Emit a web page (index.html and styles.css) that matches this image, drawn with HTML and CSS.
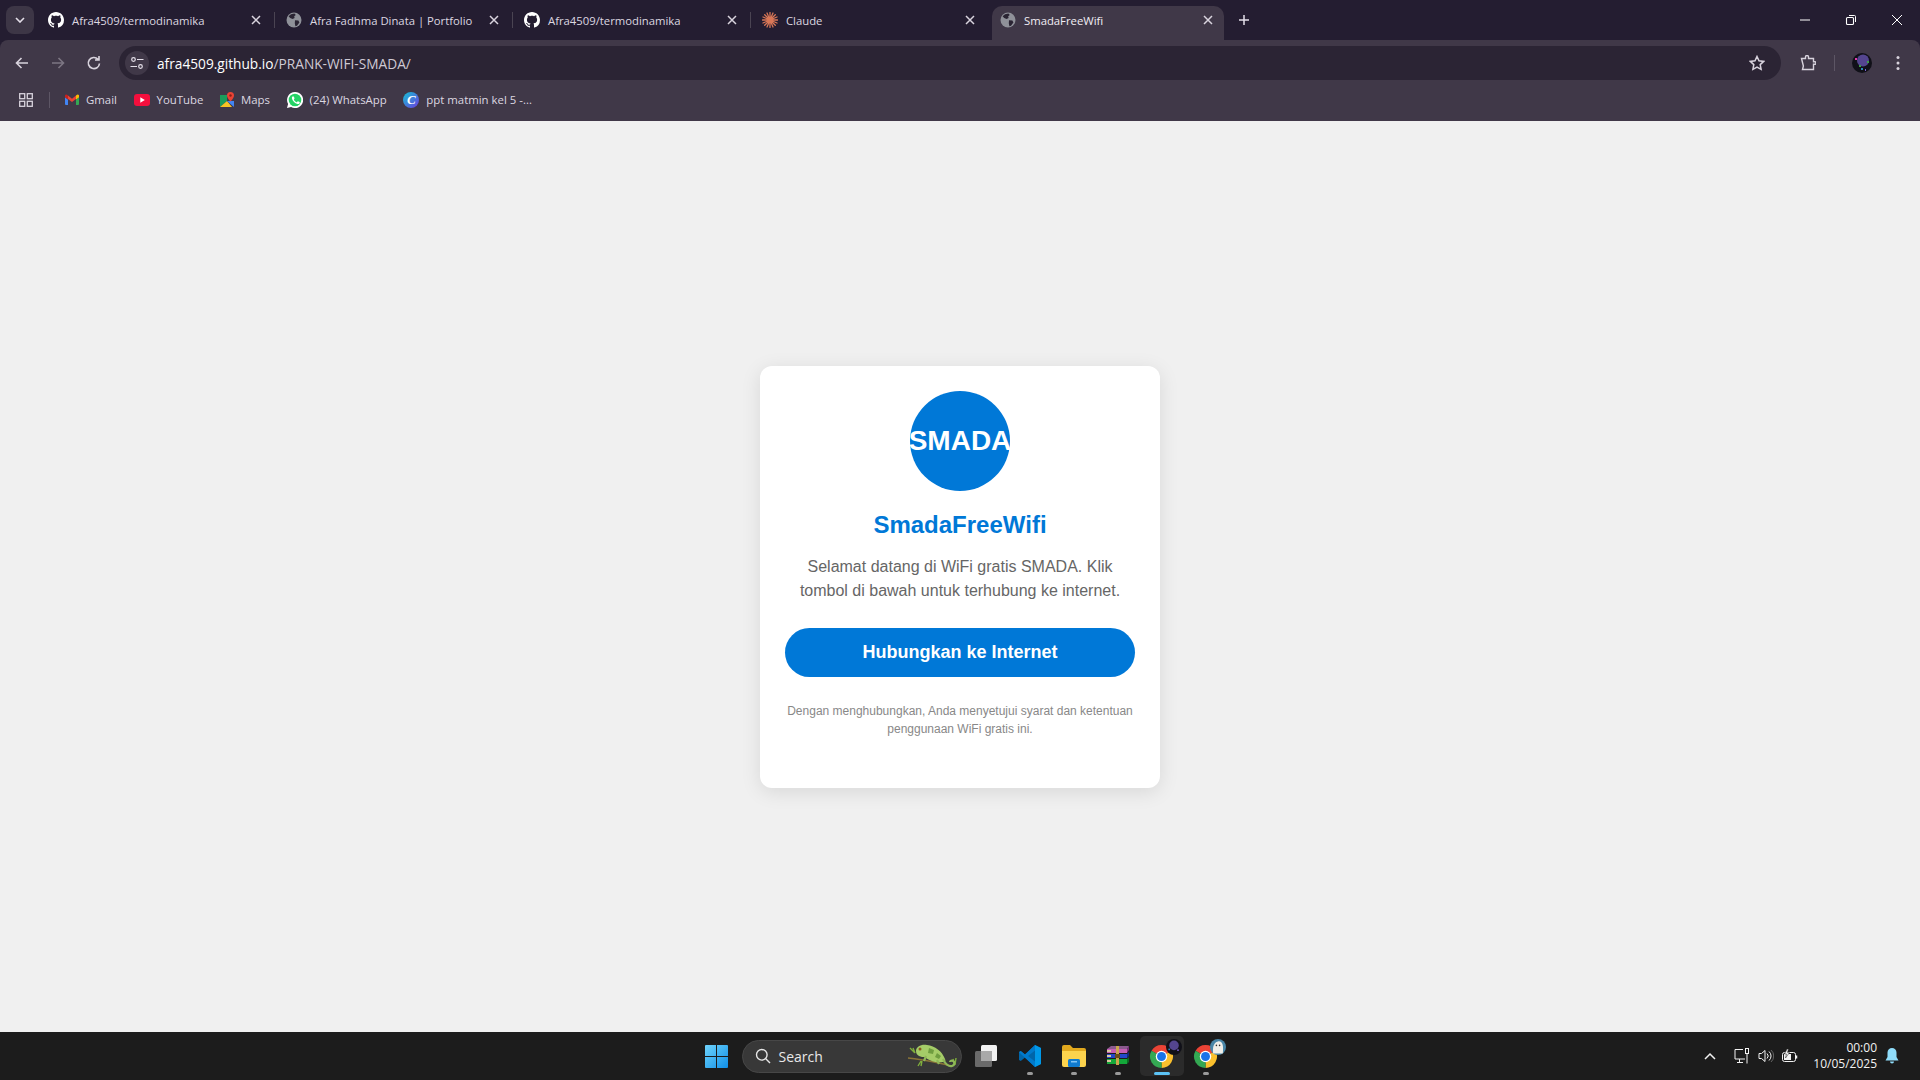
FILE: index.html
```html
<!DOCTYPE html>
<html>
<head>
    <title>SmadaFreeWifi</title>
    <link rel="stylesheet" href="styles.css">
</head>
<body>
    <svg class="defs" width="0" height="0">
        <symbol id="github" viewBox="0 0 16 16"><path fill="#fff" d="M8 0C3.58 0 0 3.58 0 8c0 3.54 2.29 6.53 5.47 7.59.4.07.55-.17.55-.38 0-.19-.01-.82-.01-1.49-2.01.37-2.53-.49-2.69-.94-.09-.23-.48-.94-.82-1.13-.28-.15-.68-.52-.01-.53.63-.01 1.08.58 1.23.82.72 1.21 1.87.87 2.33.66.07-.52.28-.87.51-1.07-1.78-.2-3.64-.89-3.64-3.95 0-.87.31-1.59.82-2.15-.08-.2-.36-1.02.08-2.12 0 0 .67-.21 2.2.82.64-.18 1.32-.27 2-.27.68 0 1.36.09 2 .27 1.53-1.04 2.2-.82 2.2-.82.44 1.1.16 1.92.08 2.12.51.56.82 1.27.82 2.15 0 3.07-1.87 3.75-3.65 3.95.29.25.54.73.54 1.48 0 1.07-.01 1.93-.01 2.2 0 .21.15.46.55.38A8.013 8.013 0 0016 8c0-4.42-3.58-8-8-8z"/></symbol>
        <symbol id="globe" viewBox="0 0 16 16"><circle cx="8" cy="8" r="7.500" fill="#8f9199"/><path fill="#2a2433" d="M5 2.200l3.400-.6 1.400 1.500-1.600 1.200.4 1.600-2 1.200-2.400-1-1.600-1.800zM9 8.200l3.400.4 1 1.800-2.400 3.400-1.600.4-.6-3z"/></symbol>
        <symbol id="close" viewBox="0 0 10 10"><path d="M1 1l8 8M9 1l-8 8" stroke="#d9d4de" stroke-width="1.500" fill="none"/></symbol>
        <symbol id="chrome" viewBox="0 0 24 24">
            <path fill="#ea4335" d="M12 12L2.470 6.500A11 11 0 0 1 21.530 6.500z"/>
            <path fill="#fbc02d" d="M12 12L21.530 6.500A11 11 0 0 1 12 23z"/>
            <path fill="#34a853" d="M12 12L12 23A11 11 0 0 1 2.470 6.500z"/>
            <circle cx="12" cy="12" r="5.500" fill="#fff"/><circle cx="12" cy="12" r="4.300" fill="#1a73e8"/>
        </symbol>
    </svg>

    <div class="tabstrip">
        <div class="tab-menu"><svg width="10" height="6" viewBox="0 0 10 6"><path d="M1 1l4 4 4-4" stroke="#e4dfe9" stroke-width="1.600" fill="none"/></svg></div>
        <div class="tab sep">
            <svg class="fav"><use href="#github"/></svg><span class="tab-title">Afra4509/termodinamika</span>
            <svg class="tab-x"><use href="#close"/></svg>
        </div>
        <div class="tab sep">
            <svg class="fav"><use href="#globe"/></svg><span class="tab-title">Afra Fadhma Dinata | Portfolio</span>
            <svg class="tab-x"><use href="#close"/></svg>
        </div>
        <div class="tab sep">
            <svg class="fav"><use href="#github"/></svg><span class="tab-title">Afra4509/termodinamika</span>
            <svg class="tab-x"><use href="#close"/></svg>
        </div>
        <div class="tab">
            <svg class="fav" viewBox="0 0 16 16"><path stroke="#d97757" stroke-width="1.300" stroke-linecap="round" d="M8 .5v15M.5 8h15M2.700 2.700l10.600 10.600M13.300 2.700L2.700 13.300M5 1l6 14M11 1L5 15M1 5l14 6M15 5L1 11"/><circle cx="8" cy="8" r="2.500" fill="#d97757"/></svg>
            <span class="tab-title">Claude</span>
            <svg class="tab-x"><use href="#close"/></svg>
        </div>
        <div class="tab active">
            <svg class="fav"><use href="#globe"/></svg><span class="tab-title">SmadaFreeWifi</span>
            <svg class="tab-x"><use href="#close"/></svg>
        </div>
        <svg class="new-tab" width="12" height="12" viewBox="0 0 12 12"><path d="M6 1v10M1 6h10" stroke="#e4dfe9" stroke-width="1.500"/></svg>
        <div class="win-btns">
            <svg width="12" height="12" viewBox="0 0 12 12"><path d="M1 6h10" stroke="#fff"/></svg>
            <svg width="12" height="12" viewBox="0 0 12 12"><rect x="1.500" y="3.500" width="7" height="7" rx="1" fill="none" stroke="#fff" stroke-width="1.100"/><path d="M4 1.500h5.500a1 1 0 0 1 1 1V8" fill="none" stroke="#fff"/></svg>
            <svg width="12" height="12" viewBox="0 0 12 12"><path d="M1 1l10 10M11 1L1 11" stroke="#fff"/></svg>
        </div>
    </div>

    <div class="toolbar">
        <svg class="nav-icon" viewBox="0 0 16 16"><path d="M14 8H2.500M7.500 3L2.500 8l5 5" stroke="#d8d3dd" stroke-width="1.600" fill="none"/></svg>
        <svg class="nav-icon" viewBox="0 0 16 16"><path d="M2 8h11.500M8.500 3l5 5-5 5" stroke="#7c7683" stroke-width="1.600" fill="none"/></svg>
        <svg class="nav-icon" viewBox="0 0 16 16"><path d="M13.500 8.500A5.600 5.600 0 1 1 12 4.200M13 1v4H9" stroke="#d8d3dd" stroke-width="1.600" fill="none"/></svg>
        <div class="omnibox">
            <span class="site-info"><svg width="14" height="14" viewBox="0 0 14 14"><g fill="none" stroke="#e4dfe9" stroke-width="1.200"><circle cx="3.500" cy="3.500" r="1.800"/><circle cx="10.500" cy="10.500" r="1.800"/><path d="M7 3.500h6.500M.5 10.500H7"/></g></svg></span>
            <span class="url">afra4509.github.io<span class="url-path">/PRANK-WIFI-SMADA/</span></span>
            <svg class="star" width="16" height="16" viewBox="0 0 16 16"><path d="M8 1.500l2 4.300 4.700.6-3.500 3.200.9 4.700L8 12l-4.100 2.300.9-4.700-3.500-3.200 4.700-.6z" fill="none" stroke="#d8d3dd" stroke-width="1.500"/></svg>
        </div>
        <svg class="ext" width="16" height="16" viewBox="0 0 16 16"><path d="M1.500 3.500h4V2a1 1 0 0 1 3 0v1.500h5v3.200h1.200a1 1 0 0 1 0 2.600h-1.200v5.200h-11l.9-3.500-.9-3.500z" fill="none" stroke="#d8d3dd" stroke-width="1.400"/></svg>
        <span class="tool-sep"></span>
        <svg class="avatar" width="20" height="20" viewBox="0 0 20 20"><circle cx="10" cy="10" r="10" fill="#101018"/><circle cx="11" cy="7.500" r="6" fill="#54458f"/><rect x="3" y="5" width="2" height="2" fill="#e23aa8"/><rect x="15" y="8" width="2" height="2" fill="#3f9a4a"/><rect x="7" y="12" width="2" height="2" fill="#3f9a4a"/><rect x="9" y="15" width="2" height="2" fill="#2b86b8"/><rect x="13" y="16" width="1" height="2" fill="#7c62d0"/></svg>
        <svg class="dots" width="4" height="16" viewBox="0 0 4 16"><g fill="#d8d3dd"><circle cx="2" cy="2.500" r="1.500"/><circle cx="2" cy="8" r="1.500"/><circle cx="2" cy="13.500" r="1.500"/></g></svg>
    </div>

    <div class="bookmarks">
        <svg class="apps" width="14" height="14" viewBox="0 0 14 14"><g fill="none" stroke="#d8d3dd" stroke-width="1.300"><rect x=".7" y=".7" width="5" height="5"/><rect x="8.300" y=".7" width="5" height="5"/><rect x=".7" y="8.300" width="5" height="5"/><rect x="8.300" y="8.300" width="5" height="5"/></g></svg>
        <span class="bm-sep"></span>
        <div class="bm">
            <svg width="14" height="11" viewBox="0 0 14 11"><path fill="#ea4335" d="M3 1.500l4 3.200 4-3.200v3.400L7 8 3 4.900z"/><path fill="#c5221f" d="M0 2v1.500l3 2.300V1.500L2 .7A1.300 1.300 0 0 0 0 2z"/><path fill="#fbbc04" d="M14 2v1.500l-3 2.300V1.500l1-.8A1.300 1.300 0 0 1 14 2z"/><path fill="#4285f4" d="M0 3.500l3 2.300V11H1a1 1 0 0 1-1-1z"/><path fill="#34a853" d="M14 3.500l-3 2.300V11h2a1 1 0 0 0 1-1z"/></svg>
            <span>Gmail</span>
        </div>
        <div class="bm">
            <svg width="16" height="12" viewBox="0 0 16 12"><rect width="16" height="12" rx="3" fill="#f40f3d"/><path d="M6.300 3.300v5.400L10.800 6z" fill="#fff"/></svg>
            <span>YouTube</span>
        </div>
        <div class="bm">
            <svg width="14" height="16" viewBox="0 0 14 16"><path fill="#1a9c5b" d="M0 3h7v6l-7 6z"/><path fill="#f7c325" d="M0 15l7-6 5 6z"/><path fill="#4285f4" d="M7 9l7 6V9z"/><path fill="#ea4335" d="M10.500 0A3.500 3.500 0 0 0 7 3.500C7 6 10.500 9.500 10.500 9.500S14 6 14 3.500A3.500 3.500 0 0 0 10.500 0z"/><circle cx="10.500" cy="3.500" r="1.200" fill="#8a1f17"/></svg>
            <span>Maps</span>
        </div>
        <div class="bm">
            <svg width="16" height="16" viewBox="0 0 16 16"><path fill="#fff" d="M8 0a8 8 0 0 0-6.900 12L0 16l4.100-1.100A8 8 0 1 0 8 0z"/><circle cx="8" cy="8" r="6.300" fill="#25d366"/><path fill="#fff" d="M5.800 4.400c-.3 0-.9.400-.9 1.500s.8 2.300 1 2.500c.1.200 1.600 2.500 3.900 3.300 1.300.5 1.900.3 2.300 0 .4-.3.700-1 .7-1.300l-.2-.3-1.600-.8c-.2 0-.4 0-.5.200l-.6.700c-.1.100-.3.100-.4 0-.4-.2-1.900-.9-2.600-2.500 0-.2 0-.3.100-.4l.5-.7v-.4l-.7-1.600c-.2-.2-.7-.2-1-.2z"/></svg>
            <span>(24) WhatsApp</span>
        </div>
        <div class="bm">
            <span class="canva">C</span>
            <span>ppt matmin kel 5 -...</span>
        </div>
    </div>

    <div class="page">
        <div class="card">
            <div class="logo">SMADA</div>
            <h1>SmadaFreeWifi</h1>
            <p class="intro">Selamat datang di WiFi gratis SMADA. Klik tombol di bawah untuk terhubung ke internet.</p>
            <button class="connect">Hubungkan ke Internet</button>
            <p class="terms">Dengan menghubungkan, Anda menyetujui syarat dan ketentuan penggunaan WiFi gratis ini.</p>
        </div>
    </div>

    <div class="taskbar">
        <div class="task-center">
            <div class="task-item">
                <svg width="23" height="23" viewBox="0 0 23 23"><defs><linearGradient id="win" x1="0" y1="0" x2="1" y2="1"><stop offset="0" stop-color="#6fd3fb"/><stop offset="1" stop-color="#0f8fe8"/></linearGradient></defs><path fill="url(#win)" d="M1 0h10v11H0V1a1 1 0 0 1 1-1zM12 0h10a1 1 0 0 1 1 1v10H12zM0 12h11v11H1a1 1 0 0 1-1-1zM12 12h11v10a1 1 0 0 1-1 1H12z"/></svg>
            </div>
            <div class="search">
                <svg width="16" height="16" viewBox="0 0 16 16"><circle cx="6.800" cy="6.800" r="5.300" fill="none" stroke="#e6e6e6" stroke-width="1.400"/><path d="M10.800 10.800l4.200 4.200" stroke="#e6e6e6" stroke-width="1.400"/></svg>
                <span>Search</span>
                <svg class="chameleon" width="52" height="26" viewBox="0 0 52 26">
                    <path d="M1 15c14 1 30 5 44 8" stroke="#8a7437" stroke-width="1.500" fill="none"/>
                    <path d="M3 5l5 5M6 5l2 5M11 23l3-5M14 23l1-5M49 15l-1 7M46 16l2 6" stroke="#7fae3c" stroke-width="1.400" fill="none"/>
                    <path fill="#a5cc68" d="M9 8c0-4 5-7 11-6 8 1 15 6 18 14 1 2 0 3-2 3-7 1-14-1-18-5-2 0-4 0-6-1-2-1-3-3-3-5z"/>
                    <path fill="#6f9d3f" d="M22 5l5 2-1 4-5-1zM30 10l4 3-2 3-4-2z"/>
                    <path d="M36 16c2 5 6 8 9 7 3-1 3-4 1-5-1-1-3 0-3 1" stroke="#8fb858" stroke-width="2.200" fill="none"/>
                    <path d="M19 13l-2 5M30 17l2 4" stroke="#8fb858" stroke-width="2.200"/>
                    <circle cx="13" cy="6" r="1.500" fill="#8a5a1e"/>
                </svg>
            </div>
            <div class="task-item">
                <svg width="24" height="24" viewBox="0 0 24 24"><rect x="7" y="1" width="16" height="16" rx="1.500" fill="#f2f2f2"/><rect x="1" y="7" width="17" height="16" rx="1.500" fill="#6a6a6a"/><rect x="7" y="7" width="11" height="10" fill="#a9a9a9"/></svg>
            </div>
            <div class="task-item open">
                <svg width="24" height="24" viewBox="0 0 24 24"><path fill="#0065a9" d="M17 1l6 3v16l-6 3-10-9.500L2.800 17 1 16V8l1.800-1L7 10.500z"/><path fill="#0098e8" d="M17 1l6 3v16l-6 3z"/><path fill="#007acc" d="M17 6.500L10 12l7 5.500V23L4 11l-3-3 1.800-1L7 10.500 17 1z"/></svg>
            </div>
            <div class="task-item open">
                <svg width="24" height="22" viewBox="0 0 24 22"><path fill="#e2a91e" d="M0 2a2 2 0 0 1 2-2h6l3 3h11a2 2 0 0 1 2 2v3H0z"/><path fill="#fcd34d" d="M0 6h24v14a2 2 0 0 1-2 2H2a2 2 0 0 1-2-2z"/><rect x="6" y="14" width="12" height="8" rx="1.500" fill="#0f7bd0"/><rect x="9" y="16" width="6" height="1.500" fill="#7fc4f5"/></svg>
            </div>
            <div class="task-item open">
                <svg width="24" height="20" viewBox="0 0 24 20">
                    <path fill="#8a5a8e" d="M1 3l4-3h18l-2 3z"/>
                    <path fill="#c65fb4" d="M1 3h20v4H1z"/><path fill="#7b2f7d" d="M21 3l2-3v4l-2 3z"/>
                    <path fill="#2348c8" d="M1 8h20v4H1z"/><path fill="#142a80" d="M21 8l2-2v4l-2 2z"/>
                    <path fill="#14a83a" d="M1 13h20v5H1z"/><path fill="#0b6a24" d="M21 13l2-2v5l-2 2z"/>
                    <path fill="#d8c9a0" d="M1 4h4v2H1zM1 9h4v2H1zM1 14h4v2H1z"/>
                    <path fill="#caa64c" d="M10 0h3v19h-3z"/><rect x="9" y="8" width="5" height="4" fill="#6b4d1c"/>
                </svg>
            </div>
            <div class="task-item running">
                <svg width="25" height="25"><use href="#chrome"/></svg>
                <svg class="chrome-badge" width="16" height="16" viewBox="0 0 20 20"><circle cx="10" cy="10" r="10" fill="#101018"/><circle cx="10" cy="8" r="6" fill="#54458f"/><rect x="3" y="12" width="2" height="2" fill="#2b86b8"/><rect x="14" y="13" width="2" height="2" fill="#7c62d0"/></svg>
            </div>
            <div class="task-item open">
                <svg width="25" height="25"><use href="#chrome"/></svg>
                <svg class="chrome-badge" width="16" height="16" viewBox="0 0 20 20"><circle cx="10" cy="10" r="10" fill="#4a87a8"/><path d="M4 18c-1-6 0-14 6-15s7 6 6 15z" fill="#f0efe9"/><circle cx="8" cy="8" r="1" fill="#333"/><circle cx="12" cy="8" r="1" fill="#333"/></svg>
            </div>
        </div>
        <div class="tray">
            <svg class="tray-chevron" width="12" height="8" viewBox="0 0 12 8"><path d="M1 7l5-5 5 5" stroke="#f2f2f2" stroke-width="1.500" fill="none"/></svg>
            <svg class="tray-net" width="16" height="16" viewBox="0 0 16 16"><path d="M9 1.500H1v9.500h10M5.500 11v3M3 14.500h6" fill="none" stroke="#f2f2f2"/><rect x="11.500" y=".5" width="3" height="5" fill="none" stroke="#f2f2f2"/><path d="M13 5.500v10" stroke="#f2f2f2"/></svg>
            <svg class="tray-vol" width="16" height="16" viewBox="0 0 16 16"><path d="M1 5.500h2.500L7 2.500v11l-3.500-3H1z" fill="none" stroke="#f2f2f2"/><path d="M9 5.500a3.500 3.500 0 0 1 0 5M11 3.500a6 6 0 0 1 0 9" fill="none" stroke="#f2f2f2"/><path d="M13 2a8 8 0 0 1 0 12" fill="none" stroke="#666"/></svg>
            <svg class="tray-bat" width="16" height="14" viewBox="0 0 16 14"><rect x=".5" y="3.500" width="13" height="9" rx="2" fill="none" stroke="#f2f2f2"/><path d="M14.500 6.500v3" stroke="#f2f2f2" stroke-width="1.500"/><rect x="2" y="5" width="7" height="6" fill="#f2f2f2"/><path d="M5 0L2.500 5h2L3.500 9 7.500 3.500h-2L6.500 0z" fill="#f2f2f2" stroke="#1c1c1c" stroke-width=".5"/></svg>
            <div class="clock"><span>00:00</span><span>10/05/2025</span></div>
            <svg class="bell" width="14" height="16" viewBox="0 0 14 16"><path fill="#8fdcfa" d="M7 0a4.500 4.500 0 0 0-4.500 4.500V9L.5 12.500h13L11.500 9V4.500A4.500 4.500 0 0 0 7 0zM5 13.500a2 2 0 0 0 4 0z"/></svg>
        </div>
    </div>
</body>
</html>
```

FILE: styles.css
```css
* {
    box-sizing: border-box;
}

html, body {
    height: 100%;
}

body {
    margin: 0;
    display: flex;
    flex-direction: column;
    overflow: hidden;
    font-family: "Liberation Sans", Arial, sans-serif;
    background-color: #241d31;
}

.defs {
    display: none;
}

/* browser tabs */
.tabstrip {
    height: 40px;
    flex: none;
    display: flex;
    align-items: flex-start;
    padding: 6px 0 0 6px;
    background-color: #241d31;
    font-family: "Open Sans", sans-serif;
    font-size: 11.300px;
    color: #dcd7e0;
}

.tab-menu {
    width: 28px;
    height: 28px;
    margin-right: 3px;
    border-radius: 8px;
    background-color: #3d3646;
    display: flex;
    align-items: center;
    justify-content: center;
}

.tab {
    position: relative;
    width: 238px;
    height: 34px;
    flex: none;
    display: flex;
    align-items: center;
    padding: 0 0 6px 11px;
}

.tab.sep::after {
    content: "";
    position: absolute;
    right: 0;
    top: 6px;
    height: 16px;
    width: 1px;
    background-color: #4a4452;
}

.tab.active {
    width: 232px;
    margin: 0 3px;
    padding-left: 8px;
    border-radius: 10px 10px 0 0;
    background-color: #403848;
    color: #f1edf4;
}

.fav {
    width: 16px;
    height: 16px;
    flex: none;
}

.tab-title {
    margin-left: 8px;
    white-space: nowrap;
}

.tab-x {
    position: absolute;
    right: 14px;
    top: 9px;
    width: 10px;
    height: 10px;
}

.tab.active .tab-x {
    right: 11px;
}

.new-tab {
    margin: 8px 0 0 11px;
}

.win-btns {
    margin-left: auto;
    padding: 8px 17px 0 0;
    display: flex;
    gap: 34px;
}

/* address bar */
.toolbar {
    height: 41px;
    flex: none;
    display: flex;
    align-items: center;
    padding: 5px 16px 0 14px;
    border-radius: 8px 8px 0 0;
    background-color: #403848;
}

.nav-icon {
    width: 16px;
    height: 16px;
    margin-right: 20px;
    flex: none;
}

.omnibox {
    width: 1662px;
    height: 34px;
    margin: 0 0 0 -3px;
    flex: none;
    display: flex;
    align-items: center;
    padding: 0 16px 0 6px;
    border-radius: 17px;
    background-color: #2b2434;
}

.site-info {
    width: 24px;
    height: 24px;
    border-radius: 50%;
    background-color: #403848;
    display: flex;
    align-items: center;
    justify-content: center;
}

.url {
    margin-left: 8px;
    font-family: "Open Sans", sans-serif;
    font-size: 13.700px;
    color: #fff;
}

.url-path {
    color: #cfcad4;
}

.star {
    margin-left: auto;
}

.ext {
    margin-left: 19px;
}

.tool-sep {
    width: 1px;
    height: 16px;
    margin-left: 18px;
    background-color: #5d5665;
}

.avatar {
    margin-left: 17px;
}

.dots {
    margin-left: 24px;
}

/* bookmarks */
.bookmarks {
    height: 40px;
    flex: none;
    display: flex;
    align-items: center;
    padding: 0 0 3px 19px;
    background-color: #403848;
    font-family: "Open Sans", sans-serif;
    font-size: 11.400px;
    color: #dcd7e0;
}

.bm-sep {
    width: 1px;
    height: 16px;
    margin: 0 15px 0 16px;
    background-color: #5d5665;
}

.bm {
    display: flex;
    align-items: center;
    gap: 7px;
    margin-right: 16.600px;
}

.canva {
    width: 16px;
    height: 16px;
    border-radius: 50%;
    background: linear-gradient(135deg, #14c4d4, #6c3be0);
    color: #fff;
    font-family: "Liberation Serif", serif;
    font-style: italic;
    font-weight: bold;
    font-size: 13px;
    line-height: 16px;
    text-align: center;
}

/* the page itself */
.page {
    flex: 1;
    display: flex;
    align-items: center;
    justify-content: center;
    background-color: #f0f0f0;
}

.card {
    width: 400px;
    padding: 25px 25px 50px;
    border-radius: 12px;
    background-color: #fff;
    box-shadow: 0 4px 20px rgba(0, 0, 0, 0.1);
    text-align: center;
}

.logo {
    width: 100px;
    height: 100px;
    margin: 0 auto 20px;
    border-radius: 50%;
    background-color: #0078d7;
    color: #fff;
    font-size: 28px;
    font-weight: bold;
    line-height: 100px;
    white-space: nowrap;
    display: flex;
    justify-content: center;
}

h1 {
    margin: 0 0 16px;
    font-size: 24px;
    color: #0078d7;
}

.intro {
    margin: 0 0 25px;
    font-size: 16px;
    line-height: 24px;
    color: #666;
}

.connect {
    width: 100%;
    height: 49px;
    border: none;
    border-radius: 25px;
    background-color: #0078d7;
    color: #fff;
    font-family: inherit;
    font-size: 18px;
    font-weight: bold;
    cursor: pointer;
}

.terms {
    margin: 25px 0 0;
    font-size: 12px;
    line-height: 18px;
    color: #888;
}

/* windows taskbar */
.taskbar {
    height: 48px;
    flex: none;
    display: grid;
    grid-template-columns: 1fr auto 1fr;
    align-items: center;
    background-color: #1c1c1c;
}

.task-center {
    grid-column: 2;
    margin-left: 2px;
    display: flex;
    align-items: center;
}

.task-item {
    position: relative;
    width: 44px;
    height: 40px;
    display: flex;
    align-items: center;
    justify-content: center;
}

.task-item.open::after,
.task-item.running::after {
    content: "";
    position: absolute;
    bottom: 1px;
    left: 19px;
    width: 6px;
    height: 3px;
    border-radius: 2px;
    background-color: #9a9a9a;
}

.task-item.running {
    border-radius: 5px;
    background-color: #2b2b2b;
}

.task-item.running::after {
    left: 14px;
    width: 16px;
    background-color: #5cc3f5;
}

.chrome-badge {
    position: absolute;
    top: 3px;
    right: 2px;
}

.search {
    width: 220px;
    height: 33px;
    margin: 0 2px 0 3px;
    padding: 0 2px 0 12px;
    display: flex;
    align-items: center;
    gap: 8px;
    border-radius: 17px;
    background-color: #383838;
    border: 1px solid #474747;
    color: #e8e8e8;
    font-family: "Open Sans", sans-serif;
    font-size: 14px;
}

.chameleon {
    margin-left: auto;
}

.tray {
    grid-column: 3;
    justify-self: end;
    display: flex;
    align-items: center;
    color: #f2f2f2;
    font-family: "Open Sans", sans-serif;
    font-size: 12px;
}

.tray-chevron {
    margin-right: 18px;
}

.tray-vol {
    margin: 0 8px;
}

.clock {
    margin-left: 15px;
    display: flex;
    flex-direction: column;
    align-items: flex-end;
    line-height: 16px;
}

.bell {
    margin: 0 21px 0 8px;
}
```
